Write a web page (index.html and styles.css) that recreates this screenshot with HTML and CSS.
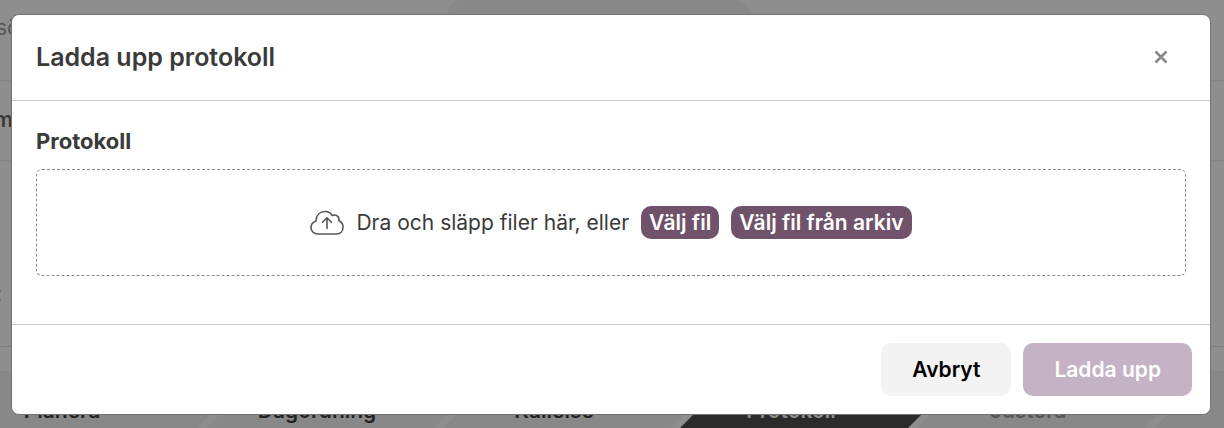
FILE: index.html
```html
<!DOCTYPE html>
<html lang="sv">
<head>
<meta charset="utf-8">
<title>Ladda upp protokoll</title>
<link rel="stylesheet" href="styles.css">
</head>
<body>
<div class="page">
  <div class="page-search"><span class="search-text">sö</span><span class="page-tab"></span></div>
  <div class="page-nav">m</div>
  <div class="page-heading">:</div>
  <ol class="steps">
    <li class="step step-first">Planera</li>
    <li class="step">Dagordning</li>
    <li class="step">Kallelse</li>
    <li class="step step-current">Protokoll</li>
    <li class="step step-next">Justera</li>
    <li class="step"></li>
  </ol>
</div>
<section class="modal" role="dialog" aria-labelledby="modal-title">
  <header class="modal-header">
    <h1 class="modal-title" id="modal-title">Ladda upp protokoll</h1>
    <button class="close" type="button" aria-label="Stäng">
      <svg class="close-icon" viewBox="0 0 14 14"><path d="M1.500 1.500l11 11M12.500 1.500L1.500 12.500"/></svg>
    </button>
  </header>
  <div class="modal-body">
    <h2 class="field-label">Protokoll</h2>
    <div class="dropzone">
      <svg class="cloud-icon" viewBox="0 0 34 26"><path d="M8 24C3.800 24 1 21.300 1 17.600C1 14.300 3 12 6 11C6.200 5.200 9.800 1.500 15 1.500C18.300 1.500 20.900 3 22.200 5.600C25.800 3.800 29.700 6.400 29 10.800C31.600 12 33 14.300 33 17.300C33 21.300 30.200 24 26.500 24ZM17 18.500V8M12.500 12.300L17 7.800L21.500 12.300"/></svg>
      <span class="drop-text">Dra och släpp filer här, eller</span>
      <button class="pick" type="button">Välj fil</button>
      <button class="pick" type="button">Välj fil från arkiv</button>
    </div>
  </div>
  <footer class="modal-footer">
    <button class="btn btn-cancel" type="button">Avbryt</button>
    <button class="btn btn-upload" type="button" disabled>Ladda upp</button>
  </footer>
</section>
</body>
</html>
```
FILE: styles.css
```css
* { box-sizing: border-box; }
body {
  margin: 0;
  overflow: hidden;
  background: #8e8e8e;
  color: #3a3a3a;
  font-family: Inter, "Noto Sans", sans-serif;
  font-size: 21px;
}
.page { height: 100vh; overflow: hidden; }
.page-search {
  display: grid;
  grid-template-columns: 448px 302px;
  height: 81px;
  border-bottom: 1px solid #858585;
}
.search-text { padding-top: 14px; color: #555; line-height: 28px; text-indent: -4px; }
.page-tab { height: 60px; border-radius: 14px; background: #888; }
.page-nav {
  height: 80px;
  padding-top: 24px;
  border-bottom: 1px solid #858585;
  font-weight: 600;
  line-height: 30px;
  text-indent: -6px;
}
.page-heading {
  height: 186px;
  padding-top: 112px;
  border-bottom: 1px solid #7d7d7d;
  font-size: 25px;
  font-weight: 700;
  line-height: 40px;
  text-indent: -6px;
}
.steps {
  display: flex;
  margin: 24px 0 0 -54px;
  padding: 0;
  list-style: none;
}
.step {
  flex: none;
  width: 268px;
  height: 80px;
  margin-right: -31px;
  background: #888;
  clip-path: polygon(0 0, 228px 0, 100% 50%, 228px 100%, 0 100%, 40px 50%);
  color: #222;
  font-weight: 600;
  line-height: 80px;
  text-align: center;
}
.step-first { padding-right: 36px; }
.step-current { background: #2b2b2b; color: #8e8e8e; }
.step-next { color: #555; }
.modal {
  position: absolute;
  top: 14px;
  left: 11px;
  right: 13px;
  border: 1px solid #737373;
  border-radius: 8px;
  background: #fff;
}
.modal-header {
  display: flex;
  align-items: center;
  justify-content: space-between;
  padding: 22px 36px 22px 24px;
  border-bottom: 1px solid #ccc;
}
.modal-title { margin: 0; font-size: 25px; font-weight: 600; line-height: 41px; }
.close {
  display: flex;
  padding: 6px 6px 8px;
  border: 0;
  background: none;
}
.close-icon { width: 14px; height: 14px; fill: none; stroke: #8a8a8a; stroke-width: 2.6; }
.modal-body { padding: 24px 24px 48px; }
.field-label { margin: 0 0 12px; font-size: 22px; font-weight: 700; line-height: 32px; }
.dropzone {
  display: flex;
  align-items: center;
  justify-content: center;
  gap: 12px;
  padding: 36px 24px;
  border: 1px dashed #8a8a8a;
  border-radius: 6px;
}
.cloud-icon {
  width: 34px;
  height: 26px;
  fill: none;
  stroke: #555;
  stroke-width: 1.6;
  stroke-linecap: round;
  stroke-linejoin: round;
}
.pick {
  padding: 0 8px;
  border: 0;
  border-radius: 10px;
  background: #70526b;
  color: #fff;
  font: inherit;
  font-weight: 600;
  line-height: 33px;
}
.modal-footer {
  display: flex;
  justify-content: flex-end;
  gap: 12px;
  padding: 18px;
  border-top: 1px solid #ccc;
}
.btn {
  padding: 0 31px;
  border: 0;
  border-radius: 10px;
  font: inherit;
  font-weight: 600;
  line-height: 53px;
}
.btn-cancel { background: #f3f3f3; color: #000; }
.btn-upload { background: #c5b2c5; color: #fff; }
```
